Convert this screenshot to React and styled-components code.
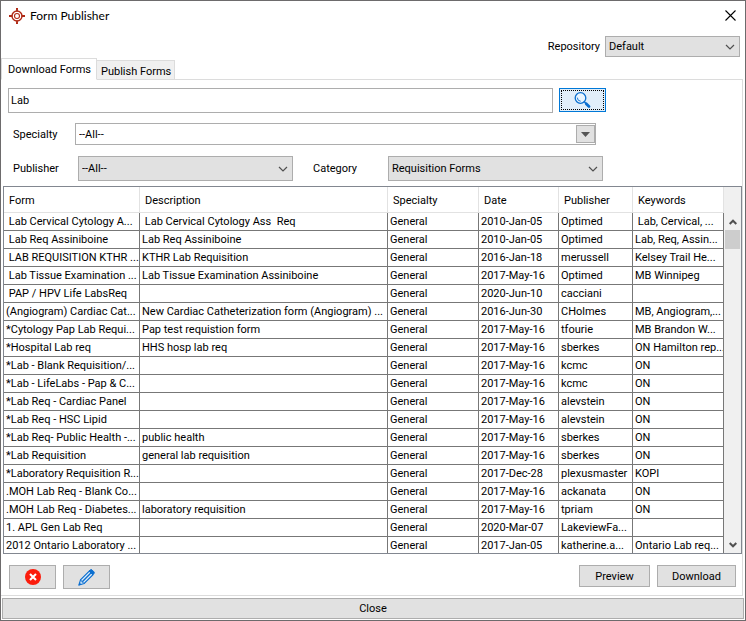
import React from "react";
import styled, { createGlobalStyle } from "styled-components";

const GlobalStyle = createGlobalStyle`
  * { box-sizing: border-box; }
  body { margin: 0; background: #fff; }
  body, button, input, select {
    font-family: Roboto, "Liberation Sans", Arial, sans-serif;
    font-size: 11px;
    color: #000;
  }
`;

const Window = styled.main`
  display: flex;
  flex-direction: column;
  min-height: 100vh;
  border: 1px solid #6d6b6c;
  background: #fff;
`;

const TitleBar = styled.header`
  display: flex;
  align-items: center;
  height: 29px;
  padding: 0 7px 0 8px;
  gap: 5px;
`;

const Title = styled.h1`
  flex: 1;
  margin: 0;
  font: 400 12px/16px Lato, "Open Sans", sans-serif;
`;

const IconButton = styled.button`
  display: grid;
  place-items: center;
  width: 16px;
  height: 16px;
  padding: 0;
  border: 0;
  background: transparent;
`;

const RepositoryRow = styled.div`
  display: flex;
  justify-content: flex-end;
  align-items: center;
  gap: 5px;
  padding: 6px 5px 0 0;
`;

const SelectBox = styled.span`
  position: relative;
  display: flex;
  flex: ${(p) => (p.$width ? "none" : 1)};
  width: ${(p) => (p.$width ? `${p.$width}px` : "auto")};
  height: ${(p) => p.$height}px;
`;

const Select = styled.select`
  appearance: none;
  width: 100%;
  height: 100%;
  padding: 0 24px 0 3px;
  border: 1px solid #adadad;
  border-radius: 0;
  background: ${(p) => (p.$light ? "#fff" : "#e1e1e1")};
`;

const SelectArrow = styled.span`
  position: absolute;
  right: 5px;
  top: 0;
  bottom: 0;
  display: grid;
  place-items: center;
  pointer-events: none;
`;

const ArrowButton = styled.span`
  position: absolute;
  right: 1px;
  top: 2px;
  bottom: 2px;
  width: 19px;
  display: grid;
  place-items: center;
  border: 1px solid #adadad;
  background: #e1e1e1;
  pointer-events: none;
`;

const Tabs = styled.div`
  display: flex;
  align-items: flex-end;
  height: 22px;
`;

const Tab = styled.button`
  height: ${(p) => (p.$active ? 22 : 20)}px;
  padding: ${(p) => (p.$active ? "0 5px 0 6px" : "2px 3px 0 4px")};
  border: 1px solid #dcdcdc;
  border-bottom-color: ${(p) => (p.$active ? "#fff" : "#dcdcdc")};
  border-left-width: ${(p) => (p.$active ? 1 : 0)}px;
  background: ${(p) => (p.$active ? "#fff" : "#f0f0f0")};
  margin-bottom: -1px;
  position: relative;
`;

const Panel = styled.section`
  display: flex;
  flex-direction: column;
  flex: 1;
  margin-right: 2px;
  border: 1px solid #dcdcdc;
  border-left: 0;
`;

const SearchRow = styled.form`
  display: flex;
  gap: 6px;
  padding: 8px 136px 0 7px;
`;

const SearchInput = styled.input`
  flex: 1;
  min-width: 0;
  height: 25px;
  padding: 0 2px;
  border: 1px solid #adadad;
  outline: 0;
`;

const SearchButton = styled.button`
  width: 47px;
  height: 24px;
  padding: 1px;
  border: 1px solid #0078d7;
  background: #e1eefa;
`;

const FocusRing = styled.span`
  display: grid;
  place-items: center;
  height: 100%;
  border: 1px dotted #000;
`;

const FieldRow = styled.div`
  display: flex;
  align-items: center;
  padding: ${(p) => p.$padding};
`;

const Label = styled.label`
  width: ${(p) => (p.$width ? `${p.$width}px` : "auto")};
  margin-left: ${(p) => p.$indent || 0}px;
`;

const TableFrame = styled.div`
  display: flex;
  margin: 5px 0 0 2px;
  border: 1px solid #828790;
`;

const Table = styled.table`
  flex: 1;
  width: 0;
  table-layout: fixed;
  border-collapse: separate;
  border-spacing: 0;
`;

const HeadCell = styled.th`
  height: 26px;
  padding: 2px 5px 0;
  text-align: left;
  font-weight: 400;
  line-height: 14px;
  border-right: 1px solid #e2e2e2;
  border-bottom: 1px solid #e2e2e2;
`;

const Cell = styled.td`
  height: 18px;
  padding: 1px 0 0 2px;
  line-height: 14px;
  white-space: pre;
  overflow: hidden;
  border-right: 1px solid #777;
  border-bottom: 1px solid #777;
  tr:last-child > & {
    height: 16px;
    border-bottom: 0;
  }
`;

const ScrollColumn = styled.div`
  display: flex;
  flex-direction: column;
  width: 17px;
  background: #f0f0f0;
`;

const ScrollHead = styled.div`
  height: 27px;
`;

const ScrollTrack = styled.div`
  display: flex;
  flex: 1;
  flex-direction: column;
  align-items: center;
`;

const ScrollThumb = styled.div`
  width: 15px;
  height: 19px;
  background: #cdcdcd;
`;

const Actions = styled.div`
  display: flex;
  gap: 7px;
  margin-top: auto;
  padding: 11px 6px 6px 8px;
`;

const Spacer = styled.span`
  flex: 1;
`;

const Button = styled.button`
  display: grid;
  place-items: center;
  width: ${(p) => p.$width}px;
  height: ${(p) => (p.$tall ? 24 : 22)}px;
  padding: 0;
  border: 1px solid #adadad;
  background: #e1e1e1;
`;

const CloseButton = styled.button`
  height: 21px;
  margin: 2px 1px 1px;
  padding: 0;
  border: 1px solid #adadad;
  background: #e1e1e1;
`;

const Chevron = () => (
  <svg width="10" height="6" viewBox="0 0 10 6" fill="none" stroke="#505050" strokeWidth="1.2">
    <path d="M1 1l4 4 4-4" />
  </svg>
);

const ScrollArrow = ({ up }) => (
  <svg width="8" height="6" viewBox="0 0 8 6" fill="none" stroke="#505050" strokeWidth="2">
    <path d={up ? "M.7 5L4 1.700 7.300 5" : "M.7 1L4 4.300 7.300 1"} />
  </svg>
);

const TargetIcon = () => (
  <svg width="16" height="16" viewBox="0 0 16 16" fill="none" stroke="#b02a16">
    <circle cx="8" cy="8" r="5" strokeWidth="1.4" />
    <circle cx="8" cy="8" r="2.500" strokeWidth="1.1" />
    <path d="M8 0v3.500M8 12.500V16M0 8h3.500M12.500 8H16" strokeWidth="1.8" />
    <path d="M7 .8h2M7 15.200h2M.8 7v2M15.200 7v2" strokeWidth="1.5" />
  </svg>
);

const MagnifierIcon = () => (
  <svg width="17" height="17" viewBox="0 0 17 17" fill="none" stroke="#0b6fd0" strokeLinecap="round">
    <circle cx="6.500" cy="6" r="5.300" strokeWidth="1.3" fill="#e9f5ff" />
    <path d="M3.300 6a3.300 3.300 0 0 0 3 3.200" strokeWidth=".9" />
    <path d="M10.300 9.800l1.500 1.500" strokeWidth="1.4" />
    <path d="M12.200 11.700l2.800 2.800" strokeWidth="2.8" />
  </svg>
);

const CancelIcon = () => (
  <svg width="16" height="16" viewBox="0 0 16 16">
    <circle cx="8" cy="8" r="8" fill="#fb1c0c" />
    <path d="M5 5l6 6M11 5l-6 6" stroke="#fff" strokeWidth="2.1" />
  </svg>
);

const PencilIcon = () => (
  <svg width="17" height="17" viewBox="0 0 17 17" fill="none" stroke="#0b6fd0">
    <path d="M1 16l1.500-5.200L11.300 2l3.700 3.700-8.800 8.800z" fill="#dcecf9" strokeWidth="1.1" />
    <path d="M4.300 12.700l8.600-8.700" strokeWidth="1.4" />
    <path d="M11.200 2l1.200-1.200q.8-.6 1.600.1l2 2q.6.8 0 1.600l-1.100 1.200z" fill="#0b6fd0" />
    <path d="M2.500 10.800l1.300 1.100.1 1.300 1.300.1 1 1.200M1 16l.6-2.100 1.500 1.500z" strokeWidth=".8" />
  </svg>
);

const Dropdown = ({ id, value, width, height }) => (
  <SelectBox $width={width} $height={height}>
    <Select id={id} defaultValue={value}>
      <option>{value}</option>
    </Select>
    <SelectArrow><Chevron /></SelectArrow>
  </SelectBox>
);

const columns = [
  ["Form", 136],
  ["Description", null],
  ["Specialty", 91],
  ["Date", 80],
  ["Publisher", 74],
  ["Keywords", 91],
];

const rows = [
  [" Lab Cervical Cytology A...", " Lab Cervical Cytology Ass  Req", "2010-Jan-05", "Optimed", " Lab, Cervical, ..."],
  [" Lab Req Assiniboine", "Lab Req Assiniboine", "2010-Jan-05", "Optimed", "Lab, Req, Assin..."],
  [" LAB REQUISITION KTHR ...", "KTHR Lab Requisition", "2016-Jan-18", "merussell", "Kelsey Trail He..."],
  [" Lab Tissue Examination ...", "Lab Tissue Examination Assiniboine", "2017-May-16", "Optimed", "MB Winnipeg"],
  [" PAP / HPV Life LabsReq", "", "2020-Jun-10", "cacciani", ""],
  ["(Angiogram) Cardiac Cat...", "New Cardiac Catheterization form (Angiogram) ...", "2016-Jun-30", "CHolmes", "MB, Angiogram,..."],
  ["*Cytology Pap Lab Requi...", "Pap test requistion form", "2017-May-16", "tfourie", "MB Brandon W..."],
  ["*Hospital Lab req", "HHS hosp lab req", "2017-May-16", "sberkes", "ON Hamilton rep..."],
  ["*Lab - Blank Requisition/...", "", "2017-May-16", "kcmc", "ON"],
  ["*Lab - LifeLabs - Pap & C...", "", "2017-May-16", "kcmc", "ON"],
  ["*Lab Req - Cardiac Panel", "", "2017-May-16", "alevstein", "ON"],
  ["*Lab Req - HSC Lipid", "", "2017-May-16", "alevstein", "ON"],
  ["*Lab Req- Public Health -...", "public health", "2017-May-16", "sberkes", "ON"],
  ["*Lab Requisition", "general lab requisition", "2017-May-16", "sberkes", "ON"],
  ["*Laboratory Requisition R...", "", "2017-Dec-28", "plexusmaster", "KOPI"],
  [".MOH Lab Req - Blank Co...", "", "2017-May-16", "ackanata", "ON"],
  [".MOH Lab Req - Diabetes...", "laboratory requisition", "2017-May-16", "tpriam", "ON"],
  ["1. APL Gen Lab Req", "", "2020-Mar-07", "LakeviewFa...", ""],
  ["2012 Ontario Laboratory ...", "", "2017-Jan-05", "katherine.a...", "Ontario Lab req..."],
];

export default function App() {
  return (
    <Window>
      <GlobalStyle />
      <TitleBar>
        <TargetIcon />
        <Title>Form Publisher</Title>
        <IconButton aria-label="Close window">
          <svg width="11" height="11" viewBox="0 0 11 11" stroke="#000" strokeWidth="1.1">
            <path d="M.5.5l10 10M10.500.5l-10 10" />
          </svg>
        </IconButton>
      </TitleBar>
      <RepositoryRow>
        <Label htmlFor="repository">Repository</Label>
        <Dropdown id="repository" value="Default" width={135} height={21} />
      </RepositoryRow>
      <Tabs role="tablist">
        <Tab role="tab" aria-selected="true" $active>Download Forms</Tab>
        <Tab role="tab" aria-selected="false">Publish Forms</Tab>
      </Tabs>
      <Panel>
        <SearchRow onSubmit={(e) => e.preventDefault()}>
          <SearchInput aria-label="Search forms" defaultValue="Lab" />
          <SearchButton aria-label="Search">
            <FocusRing><MagnifierIcon /></FocusRing>
          </SearchButton>
        </SearchRow>
        <FieldRow $padding="10px 146px 0 12px">
          <Label htmlFor="specialty" $width={62}>Specialty</Label>
          <SelectBox $height={22}>
            <Select id="specialty" defaultValue="--All--" $light>
              <option>--All--</option>
            </Select>
            <ArrowButton>
              <svg width="9" height="5" viewBox="0 0 9 5"><path d="M0 0h9L4.500 5z" fill="#555" /></svg>
            </ArrowButton>
          </SelectBox>
        </FieldRow>
        <FieldRow $padding="11px 12px 0">
          <Label htmlFor="publisher" $width={65}>Publisher</Label>
          <Dropdown id="publisher" value="--All--" width={215} height={25} />
          <Label htmlFor="category" $width={75} $indent={20}>Category</Label>
          <Dropdown id="category" value="Requisition Forms" width={215} height={25} />
        </FieldRow>
        <TableFrame>
          <Table>
            <colgroup>
              {columns.map(([name, width]) => <col key={name} width={width ?? undefined} />)}
            </colgroup>
            <thead>
              <tr>{columns.map(([name]) => <HeadCell key={name} scope="col">{name}</HeadCell>)}</tr>
            </thead>
            <tbody>
              {rows.map(([form, description, date, publisher, keywords]) => (
                <tr key={form}>
                  <Cell>{form}</Cell>
                  <Cell>{description}</Cell>
                  <Cell>General</Cell>
                  <Cell>{date}</Cell>
                  <Cell>{publisher}</Cell>
                  <Cell>{keywords}</Cell>
                </tr>
              ))}
            </tbody>
          </Table>
          <ScrollColumn>
            <ScrollHead />
            <ScrollTrack>
              <IconButton aria-label="Scroll up"><ScrollArrow up /></IconButton>
              <ScrollThumb />
              <Spacer />
              <IconButton aria-label="Scroll down"><ScrollArrow /></IconButton>
            </ScrollTrack>
          </ScrollColumn>
        </TableFrame>
        <Actions>
          <Button $width={47} $tall aria-label="Cancel"><CancelIcon /></Button>
          <Button $width={47} $tall aria-label="Edit"><PencilIcon /></Button>
          <Spacer />
          <Button $width={71}>Preview</Button>
          <Button $width={79}>Download</Button>
        </Actions>
      </Panel>
      <CloseButton>Close</CloseButton>
    </Window>
  );
}
